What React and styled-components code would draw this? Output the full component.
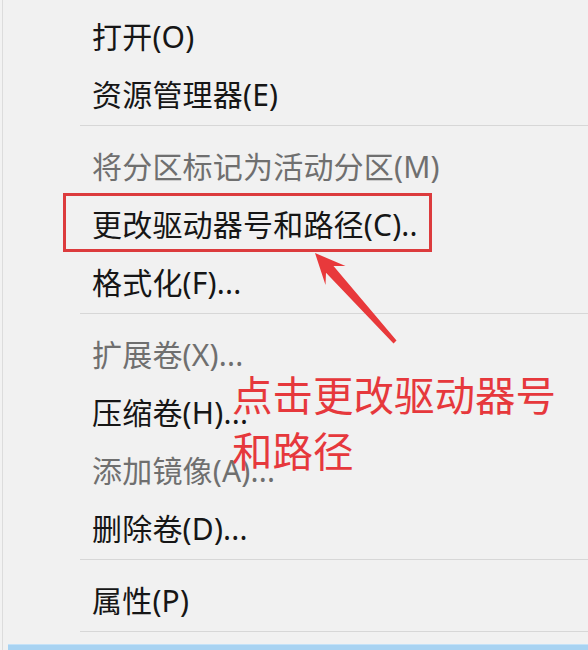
import styled, { createGlobalStyle } from 'styled-components'

const GlobalStyle = createGlobalStyle`
  html, body {
    margin: 0;
    padding: 0;
    background: #f2f2f2;
    overflow: hidden;
  }
  body {
    font-family: "Noto Sans", "Noto Sans CJK SC", sans-serif;
  }
`

const items = [
  { label: '打开(O)' },
  { label: '资源管理器(E)' },
  { sep: true },
  { label: '将分区标记为活动分区(M)', disabled: true },
  { label: '更改驱动器号和路径(C)..', marked: true },
  { label: '格式化(F)...' },
  { sep: true },
  { label: '扩展卷(X)...', disabled: true },
  { label: '压缩卷(H)...' },
  { label: '添加镜像(A)...', disabled: true },
  { label: '删除卷(D)...' },
  { sep: true },
  { label: '属性(P)' },
  { sep: true },
]

const App = () => {
  return (
    <Page>
      <GlobalStyle />
      <Menu>
        {items.map((it, i) =>
          it.sep ? (
            <Separator key={i} />
          ) : (
            <Item key={i} $disabled={it.disabled} $marked={it.marked}>
              {it.label}
            </Item>
          )
        )}
        <HoverBar />
      </Menu>
      <Arrow viewBox='0 0 588 650' width='588' height='650'>
        <polygon
          points='315,253 345.5,266 333.5,266 396.5,340.5 393.5,343.5 326,272.8 325.5,285'
          fill='#e8393b'
        />
      </Arrow>
      <Callout>
        点击更改驱动器号
        <br />
        和路径
      </Callout>
    </Page>
  )
}

export default App

const Page = styled.div`
  position: relative;
  width: 588px;
  height: 650px;
  overflow: hidden;
`

const Menu = styled.div`
  margin-left: 2px;
  padding-top: 8px;
  border-left: 1px solid #dcdcdc;
  min-height: 650px;
  background: #f1f1f1;
`

const Item = styled.div`
  position: relative;
  height: 58px;
  line-height: 58px;
  padding-left: 89px;
  font-size: 30px;
  letter-spacing: 0.2px;
  white-space: nowrap;
  color: ${(p) => (p.$disabled ? '#6f6f6f' : '#161616')};

  ${(p) =>
    p.$marked &&
    `
    &::after {
      content: '';
      position: absolute;
      left: 60px;
      top: -3px;
      width: 363px;
      height: 53px;
      border: 3.5px solid #dc3b3d;
    }
  `}
`

const Separator = styled.div`
  height: 1px;
  margin: 1px 0 12px 77px;
  background: #d7d7d7;
`

const HoverBar = styled.div`
  height: 20px;
  margin-left: 5px;
  background: #a8d3f2;
  border-top: 1px solid #c4e2f8;
`

const Arrow = styled.svg`
  position: absolute;
  left: 0;
  top: 0;
  pointer-events: none;
`

const Callout = styled.div`
  position: absolute;
  left: 232px;
  top: 366px;
  font-family: "Noto Sans CJK SC", sans-serif;
  font-size: 40.5px;
  line-height: 56px;
  color: #e6383c;
  white-space: nowrap;
`
